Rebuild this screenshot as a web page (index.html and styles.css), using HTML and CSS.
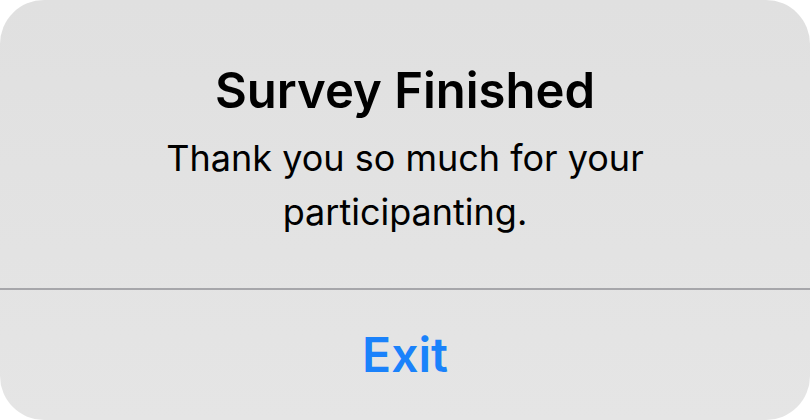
FILE: index.html
```html
<!DOCTYPE html>
<html>
<head>
<meta charset="utf-8">
<link rel="stylesheet" href="styles.css">
</head>
<body>
<div class="alert">
  <div class="content">
    <h1 class="title">Survey Finished</h1>
    <p class="message">Thank you so much for your<br>participanting.</p>
  </div>
  <div class="divider"></div>
  <div class="actions">
    <span class="action">Exit</span>
  </div>
</div>
</body>
</html>
```
FILE: styles.css
```css
html, body {
  margin: 0;
  padding: 0;
  background: #ffffff;
}
body {
  width: 810px;
  height: 420px;
  overflow: hidden;
  font-family: Inter, "Noto Sans", "Liberation Sans", sans-serif;
}
.alert {
  width: 810px;
  height: 420px;
  border-radius: 44px;
  background: linear-gradient(#e0e0e0, #e5e5e5);
  display: flex;
  flex-direction: column;
  overflow: hidden;
}
.content {
  height: 288px;
  box-sizing: border-box;
  padding-top: 64px;
  display: flex;
  flex-direction: column;
  align-items: center;
  text-align: center;
}
.title {
  margin: 0;
  font-size: 49px;
  font-weight: 600;
  line-height: 54px;
  color: #000;
  letter-spacing: 0;
}
.message {
  margin: 13px 0 0;
  font-size: 36px;
  font-weight: 400;
  line-height: 54px;
  color: #000;
}
.divider {
  height: 1.5px;
  background: #a6a6aa;
}
.actions {
  flex: 1;
  display: flex;
  align-items: center;
  justify-content: center;
}
.action {
  font-size: 48px;
  font-weight: 600;
  color: #1a82fb;
}
```
